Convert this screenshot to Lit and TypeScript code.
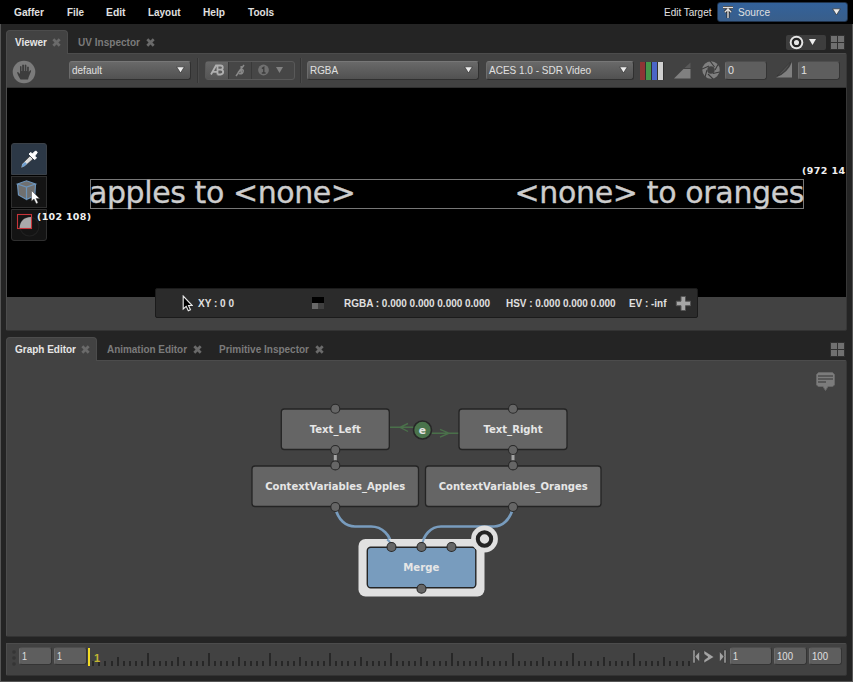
import { LitElement, html, svg, css } from "lit";
import { customElement } from "lit/decorators.js";

// Single-line label fitted to a known width.
const label = (text: string, width: number, cls = "") => html`
  <svg class="label" width=${width} height="14">
    <text class=${cls} x="0" y="11" textLength=${width} lengthAdjust="spacingAndGlyphs">${text}</text>
  </svg>`;

const closeIcon = html`<svg class="close" width="9" height="9" viewBox="0 0 9 9">
  <path d="M1.3 1.3 7.7 7.7M7.7 1.3 1.3 7.7" fill="none" stroke="currentColor" stroke-width="2.7"/></svg>`;

const arrow = html`<svg class="arrow" width="9" height="8" viewBox="0 0 9 8">
  <path d="M.6 .8H8.4L4.5 7Z" fill="#ececec" stroke="#333" stroke-width=".7"/></svg>`;

const gridIcon = html`<svg class="layout" width="15" height="15" viewBox="0 0 15 15">
  <path d="M0 0H15V15H0Z" fill="#303030"/>
  <path d="M1 1H7V7H1ZM8 1H14V7H8ZM1 8H7V14H1ZM8 8H14V14H8Z" fill="#707070"/></svg>`;

const tab = (text: string, width: number, cls: string) =>
  html`<div class="tab ${cls}">${label(text, width, "bold")}${closeIcon}</div>`;

const menus: [string, number][] = [["Gaffer", 30], ["File", 17], ["Edit", 19.5], ["Layout", 32.5], ["Help", 22], ["Tools", 26]];

const ticks = Array.from({ length: 99 }, (_, i) => {
  const frame = i + 1;
  const x = Math.round(148 + (frame - 10) * 6.075) - 1;
  const h = frame % 10 === 0 ? 13 : frame % 5 === 0 ? 9 : 5;
  return { x, h };
});

const node = (x: number, y: number, w: number, text: string, tw: number) => svg`
  <rect x=${x} y=${y} width=${w} height="40.5" rx="3" fill="#656565" stroke="#242424" stroke-width="1.3"/>
  <text class="node" x=${x + w / 2 - tw / 2} y=${y + 24.1} textLength=${tw} lengthAdjust="spacingAndGlyphs">${text}</text>`;

const plug = (x: number, y: number) =>
  svg`<circle cx=${x} cy=${y} r="4.5" fill="#666" stroke="#292929" stroke-width="1.1"/>`;

@customElement("app-root")
export class AppRoot extends LitElement {
  static styles = css`
    :host { display: block; width: 853px; height: 682px; overflow: hidden; font-family: "Liberation Sans", Arial, sans-serif; }
    * { box-sizing: border-box; }
    svg { display: block; flex: none; }
    .label { overflow: visible; }
    .label text { font-size: 11.3px; fill: currentColor; }
    .label .bold { font-weight: bold; font-size: 11.3px; }
    .label .status { font-weight: bold; font-size: 11px; }
    .app { height: 682px; display: flex; flex-direction: column; background: #242424; color: #e0e0e0; }
    .menubar { height: 24px; flex: none; background: #000; display: flex; align-items: center; padding: 0 5px 0 14px; gap: 22.5px; }
    .target { margin-left: auto; display: flex; align-items: center; gap: 6px; }
    .source { width: 131px; height: 20px; border: 1px solid #20334c; border-radius: 3px; background: linear-gradient(#33629b, #395e8a); display: flex; align-items: center; padding: 0 6px 0 4px; gap: 4px; }
    .source .arrow, .select .arrow { margin-left: auto; }
    .main { flex: 1; border: 1px solid #555; border-top: 0; padding: 6px 5px 5px 5px; display: flex; flex-direction: column; }
    .tabs { height: 23px; flex: none; display: flex; }
    .tab { height: 23px; display: flex; align-items: center; padding: 1px 7px 0 10px; gap: 5.5px; color: #7b7b7b; }
    .close { color: #6a6a6a; }
    .tab.active { color: #e6e6e6; background: #424242; border: 1px solid #4c4c4c; border-bottom: 0; border-radius: 4px 4px 0 0; padding: 0 6px 1px 8px; gap: 5px; position: relative; height: 24px; z-index: 1; }
    .tab + .tab + .tab { padding-left: 10.5px; }
    .tab-tools { margin-left: auto; display: flex; align-items: center; gap: 4px; padding: 1px 2px 0 0; }
    .focus { width: 40px; height: 15px; border-radius: 2px; background: #3d3d3d; display: flex; align-items: center; padding-left: 3px; gap: 5px; }
    .body { background: #424242; border: 1px solid #4c4c4c; border-bottom-color: #333; border-right-color: #373737; flex: none; border-radius: 0 2px 2px 2px; }
    .viewer { height: 278px; }
    .toolbar { height: 34px; display: flex; align-items: center; padding: 0 0 1px 5px; border-bottom: 1px solid #303030; }
    .hand { margin: 3px 33px 0 0; }
    .select { height: 19px; border: 1px solid #303030; border-top-color: #777; border-left-color: #6c6c6c; border-radius: 3px; background: linear-gradient(#696969, #515151); display: flex; align-items: center; padding: 0 5px 0 2px; }
    .w-default { width: 122px; } .w-rgba { width: 172px; margin-right: 7px; } .w-aces { width: 148px; }
    .rule { width: 2px; height: 25px; margin: 0 6px; background: #363636; border-right: 1px solid #4a4a4a; }
    .rule.tight { margin: 0 5px 0 5px; }
    .group { width: 90px; height: 19px; display: flex; border: 1px solid #595959; border-radius: 3px; background: #464646; }
    .cell { width: 23px; display: flex; align-items: center; justify-content: center; border-right: 1px solid #393939; }
    .cell.on { background: linear-gradient(#666, #555); }
    .cell.wide { flex: 1; border: 0; gap: 7px; padding-right: 6px; }
    .field { height: 19px; width: 42px; background: #5e5e5e; border: 1px solid #343434; border-left-color: #6c6c6c; border-top-color: #4e4e4e; border-radius: 3px; padding-left: 2px; display: flex; align-items: center; color: #e0e0e0; }
    .bars { margin: 1px 9px 0 6px; } .tri { margin: 1px 11px 0 0; } .aperture { margin-right: 5px; } .curve { margin: 0 5px 0 8px; }
    .viewport { height: 209px; background: #000; position: relative; }
    .canvas { position: absolute; inset: 0; }
    .big { font: 30px "DejaVu Sans", sans-serif; fill: #cdcdcd; stroke: #cdcdcd; stroke-width: .35; }
    .coord { font: bold 9.5px "DejaVu Sans", sans-serif; fill: #f0f0f0; }
    .tools { position: absolute; left: 4px; top: 55px; display: flex; flex-direction: column; gap: 1px; }
    .tool { width: 36px; height: 32px; background: #141414; border: 1px solid #2f2f2f; }
    .tool.on { background: #2c3846; border-color: #3b4148; border-radius: 3px 3px 0 0; }
    .tool:last-child { border-radius: 0 0 3px 3px; }
    .info { position: absolute; left: 148px; top: 200px; width: 543px; height: 30px; background: #2b2b2b; border: 1px solid #1b1b1b; border-radius: 2px; display: flex; align-items: center; padding-left: 26px; }
    .xy { margin: 0 78px 0 5px; } .swatch { margin-right: 20px; } .rgba { margin-right: 16px; } .hsv { margin-right: 13px; } .ev { margin-right: 8.5px; }
    .tabs.second { margin-top: 6px; }
    .graph { height: 277px; }
    .node { font: bold 10.7px "DejaVu Sans", sans-serif; fill: #e6e6e6; }
    .timeline { height: 33px; margin-top: 6px; display: flex; align-items: flex-start; padding-left: 5px; padding-top: 2px; }
    .timeline .field { height: 18px; width: 32.5px; margin-top: 1px; }
    .grip { margin: 2px 0 0; } .timeline .field.first { margin-left: 2px; margin-right: 2.5px; }
    .timeline .current { width: 42px; margin-right: 2px; }
    .timeline .end { width: 33px; margin-right: 2px; }
    .frame { font: bold 11px "Liberation Sans", sans-serif; fill: #c2b633; }
  `;

  private menubar() {
    return html`<div class="menubar">
      ${menus.map(([t, w]) => label(t, w, "bold"))}
      <div class="target">
        ${label("Edit Target", 47.5)}
        <div class="source">
          <svg width="12" height="13" viewBox="0 0 12 13"><path d="M1 1.5H11M6 12V4M2.8 6.2 6 3 9.2 6.2" fill="none" stroke="#292929" stroke-width="3"/><path d="M1 1.5H11M6 12V4M2.8 6.2 6 3 9.2 6.2" fill="none" stroke="#e2e2e2" stroke-width="1.4"/></svg>
          ${label("Source", 32)}${arrow}
        </div>
      </div>
    </div>`;
  }

  private toolbar() {
    return html`<div class="toolbar">
      <svg class="hand" width="24" height="24" viewBox="0 0 24 24">
        <circle cx="12" cy="12" r="11.3" fill="#7b7b7b"/>
        <path d="M8.5 19.5C7 17 5.8 15 5 12.5L6 12 8 14V6.5Q8.7 5.5 9.5 6.5V11H10.2V5Q11 4 12 5V11H12.7V5Q13.6 4 14.4 5.2V11H15.1V7Q16 6 16.8 7V12L18.2 10.2Q19.4 10 19 11.4L16.7 17 16 19.5Z" fill="#3d3d3d"/>
      </svg>
      <div class="select w-default">${label("default", 30)}${arrow}</div>
      <div class="rule"></div>
      <div class="group">
        <div class="cell on"><svg width="15" height="12" viewBox="0 0 15 12"><path d="M1 10.5 6 1.5H7.5V10.5M3 7.8H7.5M7.5 1.5H10.5Q12.8 1.5 12.8 3.5T10.8 5.7Q13.2 6 13.2 8.1T10.5 10.5H7.5M7.5 5.7H11" fill="none" stroke="#b0b0b0" stroke-width="1.8"/></svg></div>
        <div class="cell"><svg width="12" height="13" viewBox="0 0 12 13"><path d="M2 12 10 1M7.2 2V10M4 8.8 6.5 5.5M7 5.5Q10 5.3 9 8T5 9.5" fill="none" stroke="#898989" stroke-width="1.5"/></svg></div>
        <div class="cell wide">
          <svg width="11" height="12" viewBox="0 0 11 12"><circle cx="5.5" cy="6" r="5.4" fill="#707070"/><path d="M3.9 4.6 5.8 3.3V9.3M3.8 9H7.6" fill="none" stroke="#3c3c3c" stroke-width="1.3"/></svg>
          <svg width="7" height="6" viewBox="0 0 7 6"><path d="M0 0H7L3.5 6Z" fill="#818181"/></svg>
        </div>
      </div>
      <div class="rule tight"></div>
      <div class="select w-rgba">${label("RGBA", 28)}${arrow}</div>
      <div class="select w-aces">${label("ACES 1.0 - SDR Video", 102)}${arrow}</div>
      <svg class="bars" width="25" height="18" viewBox="0 0 25 18"><rect width="24" height="18" fill="#303030"/><path d="M0 0H5V18H0Z" fill="#8e3535"/><path d="M6 0H11V18H6Z" fill="#45974a"/><path d="M12 0H17V18H12Z" fill="#4b65c7"/><path d="M18 0H23V18H18Z" fill="#d0d0d0"/></svg>
      <svg class="tri" width="17" height="17" viewBox="0 0 17 17"><path d="M0 16.5 9.5 7H16.5V16.5Z" fill="#808080"/><path d="M10.5 6 16.5 .5V6Z" fill="#595959"/></svg>
      <svg class="aperture" width="18" height="18" viewBox="0 0 18 18"><circle cx="9" cy="9" r="6.2" fill="none" stroke="#808080" stroke-width="5"/><path d="M8 0 12.5 6M16 3.5 13 9M17.5 11 11 12.5M11 18 6 13M3 16 5 9M0 8 7 5" stroke="#3b3b3b" stroke-width="1.1"/></svg>
      <div class="field">${label("0", 6)}</div>
      <svg class="curve" width="18" height="18" viewBox="0 0 18 18"><path d="M1 16.5Q13 12 17 1V16.5Z" fill="#808080"/><path d="M2 15 15.5 1Q12 11 2 15Z" fill="#505050" stroke="#303030" stroke-width=".5"/></svg>
      <div class="field">${label("1", 6)}</div>
    </div>`;
  }

  private viewport() {
    return html`<div class="viewport">
      <div class="tools">
        <div class="tool on"><svg width="34" height="30" viewBox="0 0 34 30"><path d="M9 24 10 20 18 12 21 15 13 22Z" fill="#ddd" stroke="#222" stroke-width=".5"/><path d="M9.5 23.5 10.5 20 13 18 15 20 12 22.5Z" fill="#6f9fcf"/><path d="M17 10 19 8.5 20.5 10 23 7.3Q25 6.7 25.2 8.7L22.7 12 24.5 14 22.5 15.5Z" fill="#fff" stroke="#fff"/></svg></div>
        <div class="tool"><svg width="34" height="30" viewBox="0 0 34 30"><path d="M5.5 7 14.5 3.8 23.5 7 22.8 18.5 14.5 22.5 6.5 18Z" fill="#707070"/><path d="M5.5 7 14.5 3.8 23.5 7 14.5 10ZM5.5 7 6.5 18 14.5 22.5V10M23.5 7 22.8 18.5 14.5 22.5" fill="none" stroke="#6c94bb" stroke-width="1.2"/><path d="M19.5 13.5V24L22 22 24.3 26.7 26 25.7 24 21.5H27.5Z" fill="#fff" stroke="#444" stroke-width=".5"/></svg></div>
        <div class="tool"><svg width="34" height="30" viewBox="0 0 34 30"><circle cx="17.5" cy="16.5" r="9.5" fill="none" stroke="#202020" stroke-width="1.2"/><path d="M7.5 18.5Q8 7.5 19 7V18.5Z" fill="#aaa"/><rect x="5.5" y="4.5" width="14" height="14" fill="none" stroke="#c73439" stroke-width="1.1"/></svg></div>
      </div>
      <svg class="canvas" width="839" height="209" viewBox="7 88 839 209">
        <rect x="90.5" y="179.5" width="713" height="29" fill="none" stroke="#777"/>
        <text class="big" x="89" y="202.5" textLength="267">apples to &lt;none&gt;</text>
        <text class="big" x="514.5" y="202.5" textLength="290">&lt;none&gt; to oranges</text>
        <text class="coord" x="37" y="220" textLength="54">(102 108)</text>
        <text class="coord" x="802" y="173.5" textLength="43">(972 14</text>
      </svg>
      <div class="info">
        <svg width="11" height="17" viewBox="0 0 11 17"><path d="M1.2 1V14L4.2 11.3 6.3 15.8 8.5 14.8 6.5 10.5H10.2Z" fill="#000" stroke="#e8e8e8" stroke-width="1.1"/></svg>
        <div class="xy">${label("XY : 0 0", 36, "status")}</div>
        <svg class="swatch" width="12" height="12" viewBox="0 0 12 12"><path d="M0 0H12V6H0Z" fill="#000"/><path d="M0 6H6V12H0Z" fill="#686868"/><path d="M6 6H12V12H6Z" fill="#404040"/></svg>
        <div class="rgba">${label("RGBA : 0.000 0.000 0.000 0.000", 146, "status")}</div>
        <div class="hsv">${label("HSV : 0.000 0.000 0.000", 109.5, "status")}</div>
        <div class="ev">${label("EV : -inf", 37.5, "status")}</div>
        <svg width="17" height="17" viewBox="0 0 17 17"><path d="M6 1.5H10.5V6.2H15.5V10.7H10.5V15.5H6V10.7H1.3V6.2H6Z" fill="#a6a6a6" stroke="#555"/></svg>
      </div>
    </div>`;
  }

  private graph() {
    return html`<div class="body graph">
      <svg width="839" height="275" viewBox="7 361 839 275">
        <g fill="none" stroke="#789cbe" stroke-width="2.7">
          <path d="M335.5 508C338 520 346 526.5 355 526.5H371C382 526.5 391 535 391.5 547"/>
          <path d="M513 508C510 520 502 526.5 494 526.5H441C431 526.5 423 535 421.5 547"/>
        </g>
        <path d="M335.3 449V467M513 449V467" stroke="#a4a4a4" stroke-width="3"/>
        <path d="M390 427.3H414M408 423.5 400 427.3 408 431.5M430 433.2H459M440 429.3 449 433.2 440 437.2" fill="none" stroke="#4a704a" stroke-width="1.4"/>
        ${node(281.3, 409, 108, "Text_Left", 51)}
        ${node(459, 409, 108, "Text_Right", 59)}
        ${node(252, 466, 166.5, "ContextVariables_Apples", 140)}
        ${node(425.5, 466, 175.5, "ContextVariables_Oranges", 149)}
        <circle cx="422.5" cy="430" r="9" fill="#4a744c" stroke="#272727" stroke-width="1.6"/>
        <text class="node" x="418.8" y="433.5" textLength="7.5">e</text>
        <rect x="358.5" y="539" width="126" height="57.5" rx="7" fill="#e0e0e0"/>
        <path d="M387 539.5Q390.5 541 391 547M421.5 547Q422 542 424 539" stroke="#789cbe" stroke-width="2" fill="none"/>
        <rect x="367.3" y="547.3" width="108.5" height="40.5" rx="3.5" fill="#789cbe" stroke="#242424" stroke-width="1.4"/>
        <text class="node" x="403.3" y="571.3" textLength="36" lengthAdjust="spacingAndGlyphs">Merge</text>
        ${[[335.3, 408.7], [513, 408.7], [335.3, 450], [513, 450], [335.3, 465.4], [513, 465.4], [335.3, 507], [513, 507], [391.5, 547], [421.5, 547], [451.5, 547], [421.5, 588.7]].map(([x, y]) => plug(x, y))}
        <circle cx="484.5" cy="539" r="13.4" fill="#e0e0e0"/>
        <circle cx="484.5" cy="539" r="6.7" fill="none" stroke="#242424" stroke-width="4"/>
        <path d="M818.5 372.5H832.5L834.5 374.5V385L832.5 386.5H828L825.5 390.5 823 386.5H818.5L816.5 385V374.5Z" fill="#7c7c7c" stroke="#686868"/>
        <path d="M818 376H833M818 379H833M818 382H826" stroke="#4c4c4c" stroke-width="1.5"/>
      </svg>
    </div>`;
  }

  private timeline() {
    return html`<div class="body timeline">
      <svg class="grip" width="5" height="19" viewBox="0 0 5 19"><g fill="#353535"><circle cx="2" cy="4" r="1.8"/><circle cx="2" cy="10" r="1.8"/><circle cx="2" cy="16" r="1.8"/></g></svg>
      <div class="field first">${label("1", 5)}</div>
      <div class="field">${label("1", 5)}</div>
      <svg width="606" height="24" viewBox="87 645 606 24">
        <rect x="88" y="647" width="2" height="18" fill="#f3dc25"/>
        ${ticks.map((t) => svg`<rect x=${t.x} y=${665 - t.h} width="2" height=${t.h} fill="#272727"/>`)}
        <text class="frame" x="94" y="661">1</text>
      </svg>
      <svg width="37" height="22" viewBox="693 645 37 22"><g fill="#a4a4a4" stroke="#333" stroke-width=".5"><path d="M693 649H695V662H693ZM699.5 650.5V661L695 655.5Z"/><path d="M704 649.5 714 656 704 662V659L708 656 704 653Z"/><path d="M719.5 650.5V661L724 655.5ZM724 649H726V662H724Z"/></g></svg>
      <div class="field current">${label("1", 5)}</div>
      <div class="field end">${label("100", 16)}</div>
      <div class="field end">${label("100", 16)}</div>
    </div>`;
  }

  render() {
    return html`<div class="app">
      ${this.menubar()}
      <div class="main">
        <div class="tabs">
          ${tab("Viewer", 32, "active")}${tab("UV Inspector", 62, "")}
          <div class="tab-tools">
            <div class="focus">
              <svg width="15" height="15" viewBox="0 0 15 15"><circle cx="7.5" cy="7.5" r="6.8" fill="#e6e6e6"/><circle cx="7.5" cy="7.5" r="3.7" fill="none" stroke="#242424" stroke-width="2.3"/></svg>
              <svg width="7" height="6" viewBox="0 0 7 6"><path d="M0 0H7L3.5 6Z" fill="#ededed"/></svg>
            </div>
            ${gridIcon}
          </div>
        </div>
        <div class="body viewer">${this.toolbar()}${this.viewport()}</div>
        <div class="tabs second">
          ${tab("Graph Editor", 61, "active")}${tab("Animation Editor", 80, "")}${tab("Primitive Inspector", 90, "")}
          <div class="tab-tools">${gridIcon}</div>
        </div>
        ${this.graph()}
        ${this.timeline()}
      </div>
    </div>`;
  }
}
